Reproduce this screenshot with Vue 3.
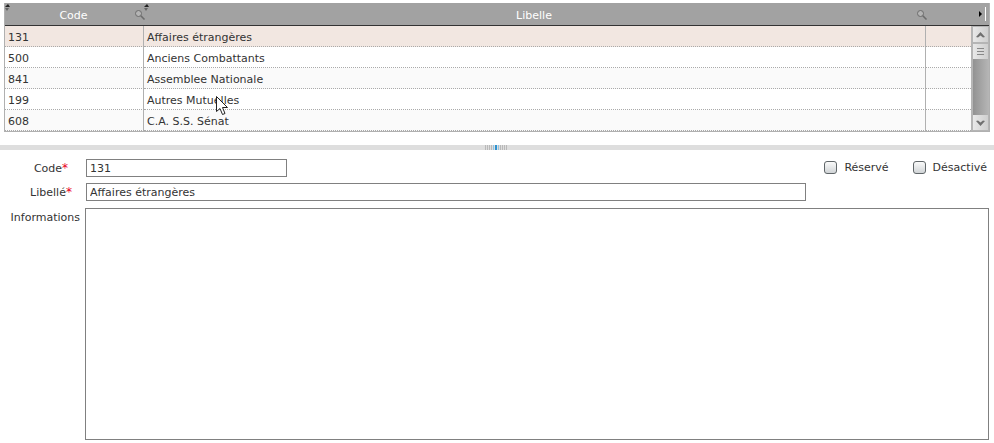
<template>
    <div class="main">
        <div class="grid">
            <table class="grid-table">
                <colgroup>
                    <col class="col-code">
                    <col>
                    <col class="col-tools">
                </colgroup>
                <thead>
                    <tr>
                        <th v-for="column in columns" :key="column" scope="col">
                            <svg class="sort" width="6" height="7" viewBox="0 0 6 7">
                                <path d="M0 3 L3 0 L5 3 Z" fill="#222" />
                                <path d="M0 4 H4 L2 7 Z" fill="#666" />
                            </svg>
                            {{ column }}
                            <svg class="search" width="12" height="12" viewBox="0 0 12 12">
                                <circle cx="4.5" cy="4.5" r="3" fill="#b4b4b4" stroke="#6c6c6c" />
                                <path d="M6.8 6.8 L10.5 10.5" stroke="#6c6c6c" stroke-width="1.6" />
                            </svg>
                        </th>
                        <th class="tools">
                            <button class="menu-button" type="button" aria-label="Colonnes">
                                <svg width="9" height="14" viewBox="0 0 9 14">
                                    <path d="M1 4 L4 7 L1 10 Z" fill="#000" />
                                    <path d="M7.5 0 V14" stroke="#fff" />
                                </svg>
                            </button>
                        </th>
                    </tr>
                </thead>
                <tbody>
                    <tr v-for="row in rows" :key="row.code" :class="{ selected: row.code === selectedCode }"
                        @click="selectRow(row)">
                        <td>{{ row.code }}</td>
                        <td>{{ row.libelle }}</td>
                        <td></td>
                    </tr>
                </tbody>
            </table>
            <div class="scrollbar">
                <button class="scroll-button" type="button" aria-label="Monter">
                    <svg width="9" height="6" viewBox="0 0 9 6">
                        <path d="M0 5 L4.5 0 L9 5 L7 5.5 L4.5 3.5 L2 5.5 Z" fill="#707070" />
                    </svg>
                </button>
                <div class="thumb">
                    <svg width="7" height="7" viewBox="0 0 7 7">
                        <path d="M0 .5 H7 M0 3.5 H7 M0 6.5 H7" stroke="#888" />
                    </svg>
                </div>
                <div class="track"></div>
                <button class="scroll-button" type="button" aria-label="Descendre">
                    <svg width="9" height="6" viewBox="0 0 9 6">
                        <path d="M0 1 L4.5 6 L9 1 L7 .5 L4.5 2.5 L2 .5 Z" fill="#707070" />
                    </svg>
                </button>
            </div>
            <svg class="pointer" width="13" height="20" viewBox="0 0 13 20">
                <path d="M.5 .5 V15.5 L4 12.5 L6.5 18.5 L9 17.5 L6.5 11.5 H11.5 Z" fill="#fff" stroke="#222" />
            </svg>
        </div>

        <div class="splitter">
            <svg width="23" height="5" viewBox="0 0 23 5">
                <path d="M.5 0 V5 M2.5 0 V5 M4.5 0 V5 M6.5 0 V5 M15.5 0 V5 M17.5 0 V5 M19.5 0 V5 M21.5 0 V5"
                    stroke="#b9b9b9" />
                <path d="M8.5 0 V5 M13.5 0 V5" stroke="#8fc4e4" />
                <path d="M11 0 V5" stroke="#2f92d0" stroke-width="2" />
            </svg>
        </div>

        <form class="form" @submit.prevent>
            <label for="code">Code<span class="required">*</span></label>
            <div class="line">
                <input id="code" v-model="code" class="field code-field" type="text">
                <div class="checks">
                    <label class="check"><input v-model="reserve" type="checkbox">Réservé</label>
                    <label class="check"><input v-model="desactive" type="checkbox">Désactivé</label>
                </div>
            </div>
            <label for="libelle">Libellé<span class="required">*</span></label>
            <div class="line">
                <input id="libelle" v-model="libelle" class="field libelle-field" type="text">
            </div>
            <label for="informations" class="info-label">Informations</label>
            <textarea id="informations" v-model="informations" class="informations"></textarea>
        </form>
    </div>
</template>

<script setup>
import { ref } from 'vue';

const columns = ['Code', 'Libelle'];
const rows = [
    { code: '131', libelle: 'Affaires étrangères' },
    { code: '500', libelle: 'Anciens Combattants' },
    { code: '841', libelle: 'Assemblee Nationale' },
    { code: '199', libelle: 'Autres Mutuelles' },
    { code: '608', libelle: 'C.A. S.S. Sénat' }
];

const selectedCode = ref('131');
const code = ref('131');
const libelle = ref('Affaires étrangères');
const informations = ref('');
const reserve = ref(false);
const desactive = ref(false);

const selectRow = (row) => {
    selectedCode.value = row.code;
    code.value = row.code;
    libelle.value = row.libelle;
};
</script>

<style>
body {
    background: #fff;
}
</style>

<style scoped>
.main {
    padding-top: 3px;
    font-family: Verdana, "DejaVu Sans", sans-serif;
    font-size: 11px;
    color: #333;
}

.main * {
    box-sizing: border-box;
}

.grid {
    position: relative;
    margin: 0 4px;
    border: 1px solid #b0b0b0;
    border-top: none;
}

.grid-table {
    width: 100%;
    table-layout: fixed;
    border-collapse: separate;
    border-spacing: 0;
}

.col-code {
    width: 139px;
}

.col-tools {
    width: 63px;
}

th {
    position: relative;
    height: 23px;
    padding: 2px 2px 0 0;
    background: #a2a2a2;
    border-bottom: 1px solid #333;
    color: #fff;
    font-weight: normal;
}

.sort {
    position: absolute;
    top: 1px;
    left: 0;
}

.search {
    position: absolute;
    top: 6px;
    right: -2px;
    z-index: 1;
}

.tools {
    padding: 0;
}

.menu-button {
    display: block;
    margin-left: auto;
    padding: 0 2px 0 0;
    border: none;
    background: none;
}

.menu-button svg {
    display: block;
}

td {
    height: 21px;
    padding: 2px 3px 0;
    border-right: 1px solid #b0b0b0;
    border-bottom: 1px dotted #aaa;
}

td:last-child {
    border-right: none;
}

tbody tr:nth-child(odd) {
    background: #fafafa;
}

tbody tr.selected {
    background: #f2e7e1;
}

.scrollbar {
    position: absolute;
    top: 23px;
    right: 0;
    bottom: 0;
    display: flex;
    flex-direction: column;
    width: 18px;
    padding: 1px 1px 1px 2px;
    background: #b5b5b5;
}

.scroll-button,
.thumb {
    display: flex;
    align-items: center;
    justify-content: center;
    height: 15px;
    margin: 0;
    padding: 0;
    border: none;
    background: linear-gradient(to right, #e8e8e8, #cfcfcf);
}

.thumb {
    margin-top: 2px;
}

.track {
    flex: 1;
    background: linear-gradient(to right, #929292, #b4b4b4);
}

.pointer {
    position: absolute;
    top: 93px;
    left: 211px;
    pointer-events: none;
}

.splitter {
    display: flex;
    justify-content: center;
    height: 5px;
    margin-top: 13px;
    padding-right: 2px;
    background: #dedede;
}

.form {
    display: grid;
    grid-template-columns: 80px 1fr;
    column-gap: 5px;
    padding: 9px 5px 3px 0;
}

.form > label {
    padding: 3px 0 0 22px;
    text-align: center;
    line-height: 13px;
}

.form > .info-label {
    padding: 4px 0 0;
    text-align: right;
}

.required {
    color: #e8001c;
    font-size: 12px;
}

.line {
    display: flex;
    align-items: flex-start;
    justify-content: space-between;
    height: 24px;
    padding-left: 1px;
}

.field {
    height: 18px;
    margin: 0;
    padding: 0 3px;
    border: 1px solid #808080;
    border-radius: 0;
    outline: none;
    background: #fff;
    font: inherit;
    color: inherit;
}

.code-field {
    width: 201px;
}

.libelle-field {
    width: 100%;
    max-width: 720px;
}

.checks {
    display: flex;
    gap: 24px;
    padding: 2px 2px 0 0;
}

.check {
    display: flex;
    align-items: center;
    gap: 7px;
}

.check input {
    appearance: none;
    width: 13px;
    height: 13px;
    margin: 0;
    border: 1px solid #606669;
    border-radius: 3px;
    background: linear-gradient(#fafafa, #d0d4d6);
}

.check input:checked {
    background: #606669;
}

.informations {
    display: block;
    width: 100%;
    height: 232px;
    margin: 1px 0 0;
    padding: 3px;
    border: 1px solid #808080;
    border-radius: 0;
    outline: none;
    resize: none;
    font: inherit;
    color: inherit;
}
</style>
